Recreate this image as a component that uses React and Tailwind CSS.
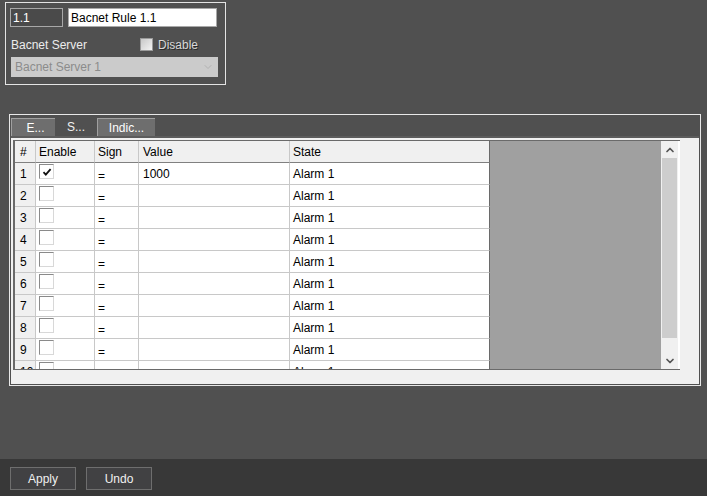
import { ChevronDown, ChevronUp } from 'lucide-react';

const rows = [1, 2, 3, 4, 5, 6, 7, 8, 9, 10];

const Cell = ({ className = '', children }) => (
  <div className={`flex h-[22px] items-center border-b border-r border-[#c8c8c8] ${className}`}>{children}</div>
);

const Check = ({ checked }) => (
  <div className="flex h-[15px] w-[15px] items-center justify-center border border-[#8a8a8a] border-b-[#d8d8d8] border-r-[#d8d8d8] bg-white">
    {checked && (
      <svg viewBox="0 0 10 10" className="h-[10px] w-[10px]">
        <path d="M1.5 5.2 L3.8 7.6 L8.6 2.2" fill="none" stroke="#111" strokeWidth="1.8" />
      </svg>
    )}
  </div>
);

const App = () => {
  return (
    <div className="flex h-[496px] w-[707px] flex-col overflow-hidden bg-[#505050] text-[12px] text-white" style={{ fontFamily: '"Liberation Sans", Arial, sans-serif' }}>
      {/* rule header box */}
      <div className="ml-[5px] mt-[2px] h-[83px] w-[221px] border border-[#e4e4e4] px-[4px] pt-[5px]">
        <div className="flex gap-[5px]">
          <div className="flex h-[19px] w-[53px] items-center border border-[#a8a8a8] bg-[#4a4a4a] px-[2px]">1.1</div>
          <div className="flex h-[19px] w-[149px] items-center border border-[#a8a8a8] bg-white px-[2px] text-black">Bacnet Rule 1.1</div>
        </div>
        <div className="mt-[10px] flex h-[15px] items-center">
          <span className="ml-[1px] w-[129px] text-[#ececec]">Bacnet Server</span>
          <div className="h-[13px] w-[13px] border border-[#9a9a9a] bg-gradient-to-br from-[#c8c8c8] to-[#f4f4f4]" />
          <span className="ml-[5px] text-[#d8d8d8] [text-shadow:1px_1px_0_#2a2a2a]">Disable</span>
        </div>
        <div className="ml-[1px] mt-[5px] flex h-[20px] w-[207px] items-center justify-between bg-[#cbcbcb] px-[4px] text-[#8c8c8c]">
          <span>Bacnet Server 1</span>
          <ChevronDown className="h-[12px] w-[12px] text-[#a8a8a8]" strokeWidth={1.5} />
        </div>
      </div>

      {/* tab panel */}
      <div className="ml-[9px] mt-[29px] flex h-[272px] w-[692px] flex-col border border-[#e8e8e8]">
        <div className="flex h-[21px] items-end pl-[1px]">
          <div className="flex h-[18px] w-[44px] items-center justify-center border-l border-t border-[#a0a0a0] bg-[#6e6e6e] pl-[4px]">E...</div>
          <div className="flex h-[18px] w-[42px] items-center justify-center text-[#f0f0f0]">S...</div>
          <div className="flex h-[18px] w-[58px] items-center justify-center border-l border-t border-[#a0a0a0] bg-[#6e6e6e]">Indic...</div>
        </div>
        <div className="mx-[1px] mb-[1px] flex-1 border-t-2 border-[#5c5c5c] bg-[#f0f0f0] pl-[2px] pr-[19px] pb-[12px] pt-[2px]">
          <div className="flex h-[230px] border-l-2 border-t border-b border-[#6a6a6a] text-black">
            <div className="h-full w-[475px] overflow-hidden bg-white">
              <div className="grid grid-cols-[21px_59px_44px_151px_200px]">
                <Cell className="border-b-[#808080] bg-[#f0f0f0] pl-[5px]">#</Cell>
                <Cell className="border-b-[#808080] bg-[#f0f0f0] pl-[3px]">Enable</Cell>
                <Cell className="border-b-[#808080] bg-[#f0f0f0] pl-[3px]">Sign</Cell>
                <Cell className="border-b-[#808080] bg-[#f0f0f0] pl-[4px]">Value</Cell>
                <Cell className="border-b-[#808080] border-r-[#6a6a6a] bg-[#f0f0f0] pl-[3px]">State</Cell>
                {rows.map((n) => (
                  <div key={n} className="contents">
                    <Cell className="bg-[#f0f0f0] pl-[5px]">{n}</Cell>
                    <Cell className="pl-[3px]">
                      <div className="-mt-[4px]">
                        <Check checked={n === 1} />
                      </div>
                    </Cell>
                    <Cell className="pl-[3px] pt-[4px]">=</Cell>
                    <Cell className="pl-[4px]">{n === 1 ? '1000' : ''}</Cell>
                    <Cell className="border-r-[#6a6a6a] pl-[3px]">Alarm 1</Cell>
                  </div>
                ))}
              </div>
            </div>
            <div className="h-full flex-1 bg-[#a0a0a0]" />
            <div className="flex h-full w-[17px] flex-col bg-[#f0f0f0]">
              <div className="flex h-[17px] items-center justify-center">
                <ChevronUp className="h-[12px] w-[12px] text-[#555555]" strokeWidth={3.5} />
              </div>
              <div className="mx-[1px] h-[180px] bg-[#cdcdcd]" />
              <div className="flex-1" />
              <div className="flex h-[17px] items-center justify-center">
                <ChevronDown className="h-[12px] w-[12px] text-[#555555]" strokeWidth={3.5} />
              </div>
            </div>
            <div className="h-full w-[2px] bg-white" />
          </div>
        </div>
      </div>

      <div className="flex-1" />

      {/* footer */}
      <div className="flex h-[37px] items-center gap-[10px] bg-[#383838] pl-[10px] pt-[2px]">
        <button type="button" className="h-[23px] w-[66px] border border-[#6e6e6e] bg-[#414143] text-[12px] text-[#f0f0f0]">Apply</button>
        <button type="button" className="h-[23px] w-[66px] border border-[#6e6e6e] bg-[#414143] text-[12px] text-[#f0f0f0]">Undo</button>
      </div>
    </div>
  );
};

export default App;
